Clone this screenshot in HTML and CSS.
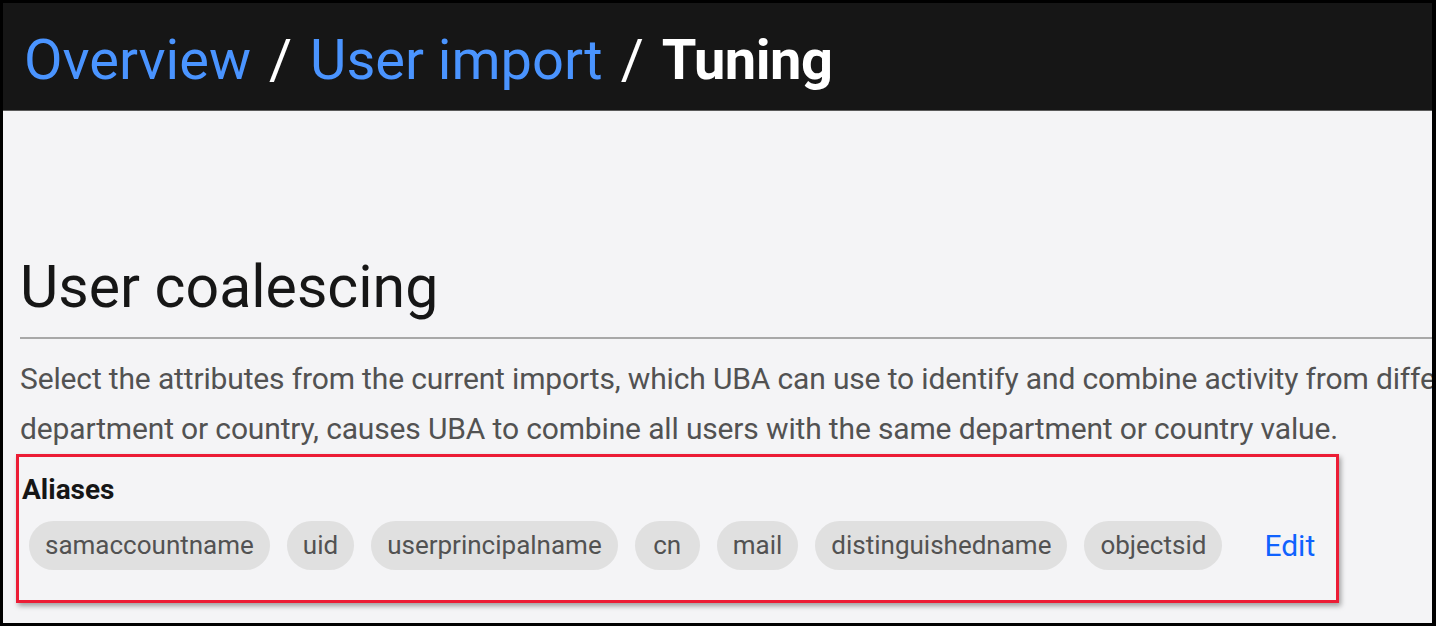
FILE: index.html
```html
<!DOCTYPE html>
<html lang="en">
<head>
<meta charset="utf-8">
<title>Tuning</title>
<link rel="stylesheet" href="styles.css">
</head>
<body>
<div class="frame">
  <header class="topbar">
    <nav class="crumbs">
      <a class="crumb-link" href="#">Overview</a><span class="sep">/</span><a class="crumb-link" href="#">User import</a><span class="sep">/</span><span class="crumb-current">Tuning</span>
    </nav>
  </header>
  <main class="content">
    <h1 class="title">User coalescing</h1>
    <hr class="rule">
    <p class="desc">
      <span class="desc-line">Select the attributes from the current imports, which UBA can use to identify and combine activity from different users. Selecting an attribute that is shared by many users, such as</span>
      <span class="desc-line">department or country, causes UBA to combine all users with the same department or country value.</span>
    </p>
    <section class="aliases">
      <h2 class="aliases-title">Aliases</h2>
      <div class="chip-row">
        <span class="chip">samaccountname</span>
        <span class="chip">uid</span>
        <span class="chip">userprincipalname</span>
        <span class="chip">cn</span>
        <span class="chip">mail</span>
        <span class="chip">distinguishedname</span>
        <span class="chip">objectsid</span>
        <a class="edit" href="#">Edit</a>
      </div>
    </section>
  </main>
</div>
</body>
</html>
```

FILE: styles.css
```css
html, body {
  margin: 0;
  padding: 0;
  background: #ffffff;
}

body {
  font-family: Roboto, "Noto Sans", Arial, sans-serif;
}

.frame {
  box-sizing: border-box;
  width: 1436px;
  height: 626px;
  border-style: solid;
  border-color: #000;
  border-width: 3px 4px 3px 3px;
  background: #f4f4f6;
  overflow: hidden;
  display: flex;
  flex-direction: column;
}

.topbar {
  box-sizing: border-box;
  height: 108px;
  background: #161616;
  border-bottom: 1px solid #5a5a5a;
  padding: 24px 0 0 21px;
  flex: none;
}

.crumbs {
  font-size: 56px;
  line-height: 66px;
  white-space: nowrap;
}

.crumb-link {
  color: #4a94ff;
  text-decoration: none;
}

.sep {
  color: #ffffff;
  margin: 0 18px 0 18px;
}

.crumb-current {
  color: #ffffff;
  font-weight: 700;
  letter-spacing: -0.5px;
}

.content {
  padding: 0 0 0 17px;
  display: flex;
  flex-direction: column;
}

.title {
  margin: 140px 0 0 0;
  font-size: 59px;
  line-height: 72px;
  font-weight: 400;
  color: #161616;
}

.rule {
  margin: 14px 0 0 0;
  border: 0;
  height: 2px;
  background: #a8a8a8;
}

.desc {
  margin: 15px 0 0 0;
  font-size: 30px;
  line-height: 50px;
  color: #525252;
  letter-spacing: -0.15px;
}

.desc-line {
  display: block;
  white-space: nowrap;
}

.aliases {
  box-sizing: border-box;
  width: 1323px;
  height: 149px;
  margin: 0 0 0 -4px;
  border: 3px solid #ec1c35;
  box-shadow: 2px 3px 5px rgba(0, 0, 0, 0.35);
  padding: 16px 0 0 3px;
}

.aliases-title {
  margin: 0;
  font-size: 28px;
  line-height: 34px;
  font-weight: 700;
  color: #161616;
}

.chip-row {
  display: flex;
  align-items: center;
  gap: 17px;
  margin: 14px 0 0 7px;
}

.chip {
  box-sizing: border-box;
  min-width: 65px;
  height: 49px;
  padding: 0 16px;
  border-radius: 25px;
  background: #e0e0e0;
  color: #525252;
  font-size: 26px;
  line-height: 49px;
  text-align: center;
}

.edit {
  margin-left: 25px;
  font-size: 30px;
  color: #0f62fe;
  text-decoration: none;
}
```
